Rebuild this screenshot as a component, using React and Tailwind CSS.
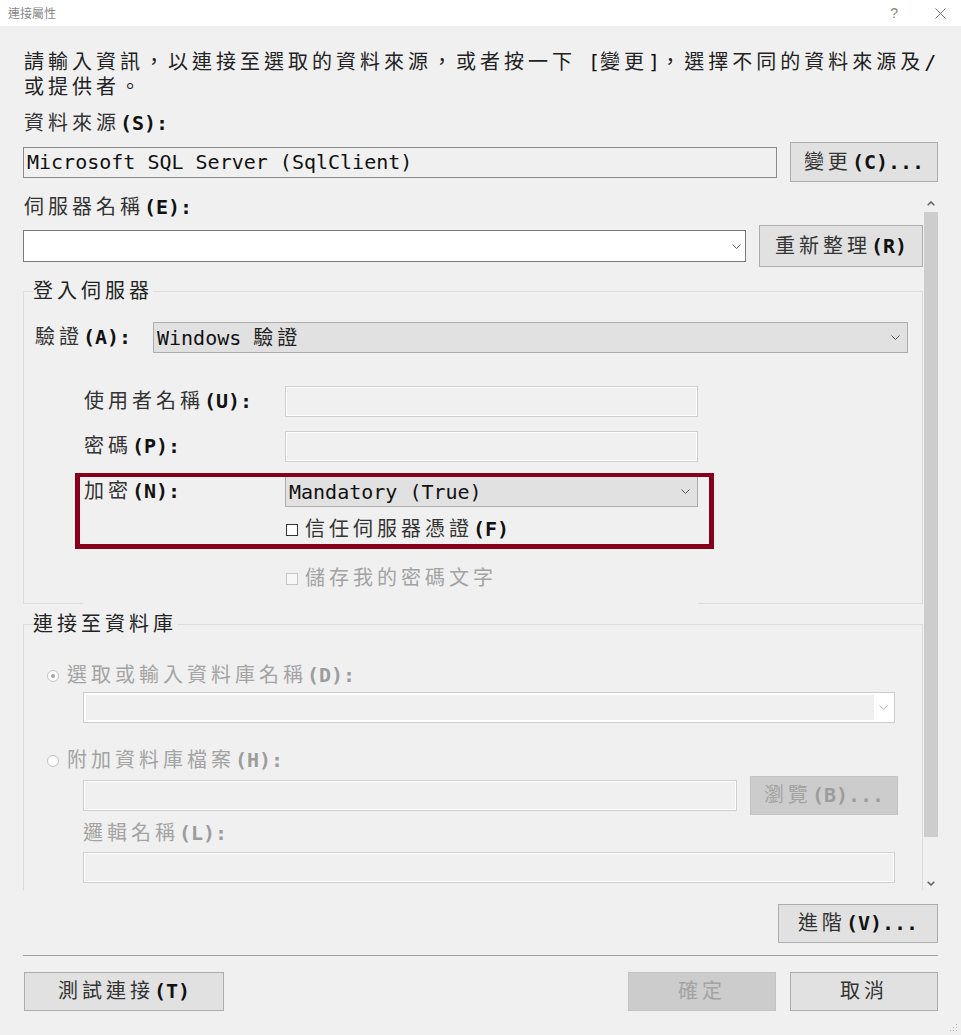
const CJK_RE = /([\u2e80-\u9fff\uf900-\ufaff\uff00-\uffef\u3000-\u303f]+)/;

const tones = {
  label: { cjk: "text-[#333] tracking-[4px]", ascii: "font-bold text-[#111]" },
  value: { cjk: "text-[#222] tracking-[4px]", ascii: "text-[#111]" },
  off: { cjk: "text-[#a3a3a3] tracking-[4px]", ascii: "font-bold text-[#9c9c9c]" },
};

// split text into CJK / latin runs so the CJK glyphs get the wide advance of the original
function T({ text, tone = "label" }) {
  const t = tones[tone];
  return (
    <span className="whitespace-pre">
      {text
        .split(CJK_RE)
        .filter(Boolean)
        .map((p, i) =>
          CJK_RE.test(p) ? (
            <span key={i} className={t.cjk}>{p}</span>
          ) : (
            <span key={i} className={t.ascii}>{p}</span>
          )
        )}
    </span>
  );
}

function Chevron({ color = "#555" }) {
  return (
    <svg width="9" height="5" viewBox="0 0 9 5">
      <path d="M0.5 0.5 L4.5 4.5 L8.5 0.5" stroke={color} fill="none" strokeWidth="1" />
    </svg>
  );
}

function Button({ text, className = "", disabled }) {
  return (
    <div
      className={
        "flex items-center justify-center border text-[20px] leading-[25px] whitespace-nowrap " +
        (disabled ? "bg-[#cccccc] border-[#c4c4c4] " : "bg-[#e1e1e1] border-[#adadad] ") +
        className
      }
    >
      <T text={text} tone={disabled ? "off" : "label"} />
    </div>
  );
}

function Label({ text, className = "", tone = "label" }) {
  return (
    <div className={"text-[20px] leading-[25px] whitespace-nowrap " + className}>
      <T text={text} tone={tone} />
    </div>
  );
}

function OffInput({ className = "" }) {
  return <div className={"h-[31px] border border-[#cfcfcf] shadow-[inset_0_0_0_1px_#ffffff] " + className} />;
}

function Legend({ text }) {
  return (
    <legend className="ml-[9px] text-[20px] leading-[25px] whitespace-nowrap">
      <T text={text} tone="value" />
    </legend>
  );
}

export default function App() {
  return (
    <div className="w-[961px] h-[1035px] bg-[#f0f0f0] flex flex-col overflow-hidden relative font-['DejaVu_Sans_Mono','Noto_Sans_CJK_TC',monospace]">
      {/* title bar */}
      <div className="h-[26px] bg-white flex items-center pl-[8px] pr-[15px] shrink-0">
        <span className="text-[12px] text-[#888] font-['Noto_Sans_CJK_TC',sans-serif]">連接屬性</span>
        <span className="ml-auto text-[14px] leading-none text-[#888] font-['Liberation_Sans',sans-serif]">?</span>
        <svg className="ml-[37px]" width="11" height="11" viewBox="0 0 11 11">
          <path d="M0.5 0.5 L10.5 10.5 M10.5 0.5 L0.5 10.5" stroke="#777" strokeWidth="1" />
        </svg>
      </div>

      <div className="px-[23px] flex flex-col">
        <div className="mt-[24px] text-[20px] leading-[25px]">
          <div className="whitespace-nowrap pl-[1px]">
            <T text="請輸入資訊，以連接至選取的資料來源，或者按一下 [變更]，選擇不同的資料來源及/" tone="value" />
          </div>
          <div className="whitespace-nowrap pl-[1px]">
            <T text="或提供者。" tone="value" />
          </div>
        </div>

        <Label text="資料來源(S):" className="mt-[11px] pl-[1px]" />

        <div className="mt-[6px] h-[40px] flex items-center gap-[13px]">
          <div className="flex-1 h-[31px] border border-[#8a8a8a] flex items-center pl-[3px] text-[20px]">
            <T text="Microsoft SQL Server (SqlClient)" tone="value" />
          </div>
          <Button text="變更(C)..." className="w-[148px] h-[40px]" />
        </div>

        {/* scrolling panel */}
        <div className="mt-[13px] h-[695px] flex">
          <div className="w-[900px] overflow-hidden flex flex-col">
            <Label text="伺服器名稱(E):" className="pl-[1px]" />
            <div className="mt-[5px] h-[42px] flex items-center gap-[13px] shrink-0">
              <div className="flex-1 h-[32px] bg-white border border-[#7a7a7a] flex items-center justify-end pr-[4px]">
                <Chevron />
              </div>
              <Button text="重新整理(R)" className="w-[164px] h-[42px]" />
            </div>

            <fieldset className="mt-[12px] border border-b-0 border-[#dcdcdc] flex flex-col shrink-0">
              <Legend text="登入伺服器" />
              <div className="mt-[18px] h-[31px] flex items-center pl-[11px] pr-[14px]">
                <Label text="驗證(A):" className="w-[118px]" />
                <div className="flex-1 h-[31px] bg-[#e1e1e1] border border-[#adadad] flex items-center pl-[3px] pr-[7px] text-[20px]">
                  <T text="Windows 驗證" tone="value" />
                  <span className="ml-auto"><Chevron /></span>
                </div>
              </div>

              <div className="mt-[33px] h-[31px] flex items-center pl-[60px]">
                <Label text="使用者名稱(U):" className="w-[201px]" />
                <OffInput className="w-[413px]" />
              </div>
              <div className="mt-[14px] h-[31px] flex items-center pl-[60px]">
                <Label text="密碼(P):" className="w-[201px]" />
                <OffInput className="w-[413px]" />
              </div>

              <div className="mt-[14px] relative">
                <div className="h-[31px] flex items-center pl-[60px]">
                  <Label text="加密(N):" className="w-[201px]" />
                  <div className="w-[413px] h-[31px] bg-[#e1e1e1] border border-[#adadad] flex items-center pl-[3px] pr-[7px] text-[20px]">
                    <T text="Mandatory (True)" tone="value" />
                    <span className="ml-auto"><Chevron /></span>
                  </div>
                </div>
                <div className="mt-[10px] h-[25px] flex items-center pl-[262px] gap-[7px]">
                  <div className="w-[12px] h-[12px] border border-[#333] bg-white" />
                  <Label text="信任伺服器憑證(F)" />
                </div>
                <div className="absolute left-[51px] top-[-3px] w-[639px] h-[76px] border-[5px] border-t-4 border-[#85001a]" />
              </div>

              <div className="mt-[24px] h-[25px] flex items-center pl-[262px] gap-[7px]">
                <div className="w-[12px] h-[12px] border border-[#c6c6c6] bg-[#f7f7f7]" />
                <Label text="儲存我的密碼文字" tone="off" />
              </div>

              <div className="mt-[12px] h-px flex">
                <div className="w-[59px] bg-[#dcdcdc]" />
                <div className="flex-1" />
                <div className="w-[224px] bg-[#dcdcdc]" />
              </div>
            </fieldset>

            <fieldset className="mt-[8px] border border-b-0 border-[#dcdcdc] flex flex-col pb-[40px] shrink-0">
              <Legend text="連接至資料庫" />
              <div className="mt-[26px] h-[25px] flex items-center pl-[23px] gap-[8px]">
                <div className="w-[12px] h-[12px] rounded-full border border-[#c2c2c2] bg-white flex items-center justify-center">
                  <div className="w-[4px] h-[4px] rounded-full bg-[#a6a6a6]" />
                </div>
                <Label text="選取或輸入資料庫名稱(D):" tone="off" />
              </div>
              <div className="mt-[4px] ml-[59px] mr-[27px] h-[31px] border border-[#cccccc] bg-white p-[2px] flex">
                <div className="flex-1 bg-[#f0f0f0]" />
                <div className="w-[18px] flex items-center justify-center">
                  <Chevron color="#b4b4b4" />
                </div>
              </div>

              <div className="mt-[25px] h-[25px] flex items-center pl-[23px] gap-[8px]">
                <div className="w-[12px] h-[12px] rounded-full border border-[#c2c2c2] bg-white" />
                <Label text="附加資料庫檔案(H):" tone="off" />
              </div>
              <div className="mt-[3px] h-[39px] flex items-center pl-[59px] pr-[24px] gap-[13px]">
                <OffInput className="flex-1" />
                <Button text="瀏覽(B)..." disabled className="w-[148px] h-[39px]" />
              </div>
              <Label text="邏輯名稱(L):" tone="off" className="mt-[6px] pl-[59px]" />
              <OffInput className="mt-[6px] ml-[59px] mr-[27px]" />
            </fieldset>
          </div>

          {/* scrollbar */}
          <div className="w-[15px] flex flex-col pl-[1px]">
            <div className="h-[17px] flex items-center justify-center">
              <svg width="8" height="5" viewBox="0 0 8 5">
                <path d="M0.7 4.3 L4 1 L7.3 4.3" stroke="#606060" strokeWidth="1.5" fill="none" />
              </svg>
            </div>
            <div className="h-[625px] bg-[#cdcdcd]" />
            <div className="flex-1" />
            <div className="h-[14px] flex items-center justify-center">
              <svg width="8" height="5" viewBox="0 0 8 5">
                <path d="M0.7 0.7 L4 4 L7.3 0.7" stroke="#606060" strokeWidth="1.5" fill="none" />
              </svg>
            </div>
          </div>
        </div>

        <Button text="進階(V)..." className="mt-[14px] self-end w-[160px] h-[39px]" />

        <div className="mt-[12px] h-px bg-[#a0a0a0]" />

        <div className="mt-[16px] h-[39px] flex gap-[14px]">
          <Button text="測試連接(T)" className="w-[200px] h-[39px] ml-[1px]" />
          <Button text="確定" disabled className="ml-auto w-[148px] h-[39px]" />
          <Button text="取消" className="w-[148px] h-[39px]" />
        </div>
      </div>

      {/* resize grip */}
      <svg className="absolute right-[3px] bottom-[3px]" width="8" height="8" viewBox="0 0 8 8">
        <rect x="6" y="0" width="1" height="1" fill="#b5b5b5" />
        <rect x="3" y="3" width="1" height="1" fill="#b5b5b5" />
        <rect x="6" y="3" width="1" height="1" fill="#b5b5b5" />
        <rect x="0" y="6" width="1" height="1" fill="#b5b5b5" />
        <rect x="3" y="6" width="1" height="1" fill="#b5b5b5" />
        <rect x="6" y="6" width="1" height="1" fill="#b5b5b5" />
      </svg>
    </div>
  );
}
